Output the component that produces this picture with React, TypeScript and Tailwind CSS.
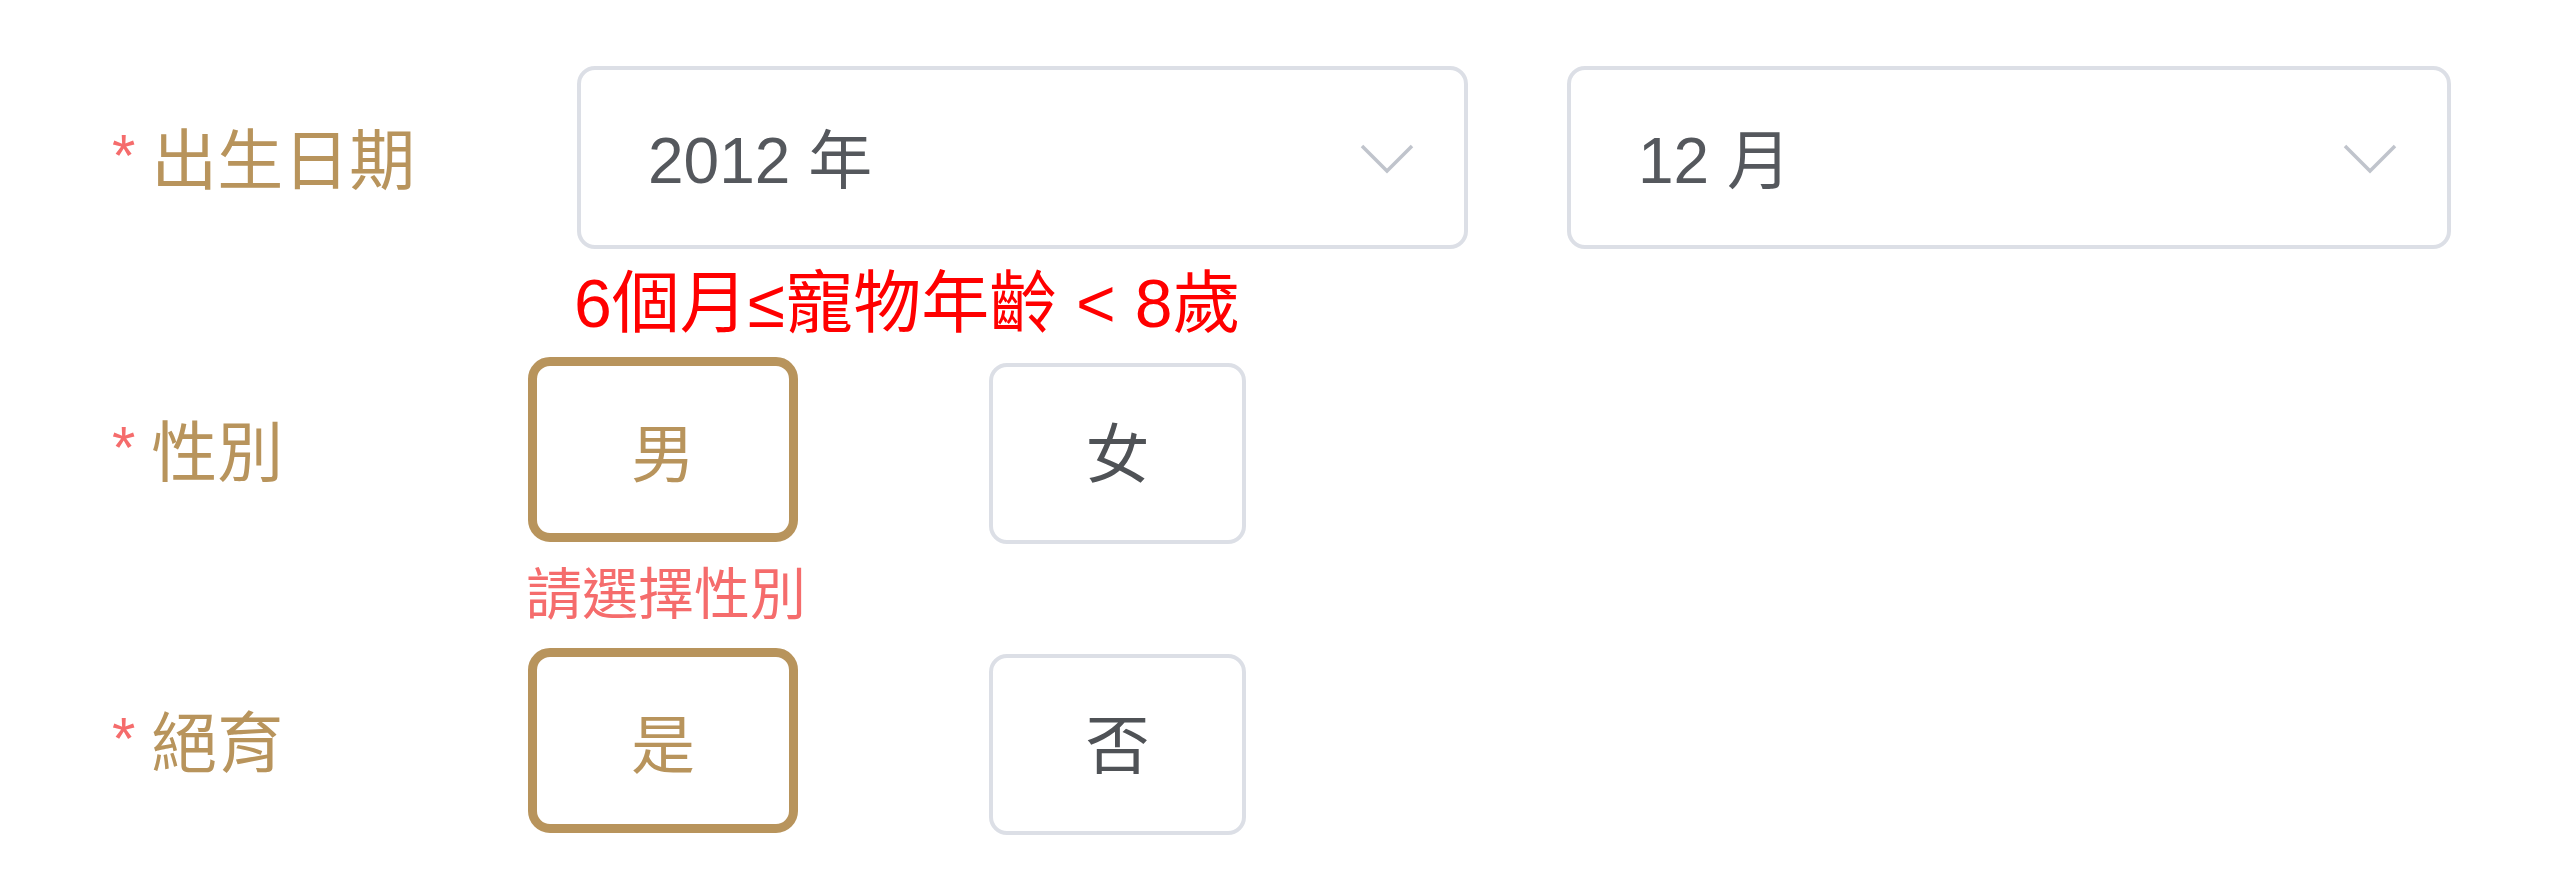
import React from "react";

function Chevron() {
  return (
    <svg width="54" height="30" viewBox="0 0 54 30" className="shrink-0 mt-[2px]">
      <polyline points="2,2 27,27 52,2" fill="none" stroke="#c0c4cc" strokeWidth="3.5" />
    </svg>
  );
}

function FieldLabel({ text, width }: { text: string; width: string }) {
  return (
    <div className={`${width} shrink-0 flex items-center text-[66px] leading-none text-[#b8945c] pt-[6px]`}>
      <span className="text-[#f56c6c] mr-[16px] self-start mt-[-2px] text-[60px]">*</span>
      <span>{text}</span>
    </div>
  );
}

function Select({ value, width }: { value: string; width: string }) {
  return (
    <div
      className={`${width} h-[183px] shrink-0 border-[4px] border-[#dcdfe6] rounded-[18px] flex items-center justify-between pl-[67px] pr-[50px] bg-white`}
    >
      <span className="text-[64px] leading-none text-[#55585d] pt-[6px]">{value}</span>
      <Chevron />
    </div>
  );
}

function Choice({ text, selected }: { text: string; selected?: boolean }) {
  if (selected) {
    return (
      <div className="w-[270px] h-[185px] shrink-0 border-[9px] border-[#b8945c] rounded-[22px] flex items-center justify-center pt-[10px] text-[64px] leading-none text-[#b8945c] bg-white">
        {text}
      </div>
    );
  }
  return (
    <div className="w-[257px] h-[181px] mt-[6px] shrink-0 border-[4px] border-[#dcdfe6] rounded-[18px] flex items-center justify-center pt-[2px] text-[64px] leading-none text-[#4f5256] bg-white">
      {text}
    </div>
  );
}

export default function App() {
  return (
    <div className="w-[2560px] h-[876px] bg-white overflow-hidden font-['Liberation_Sans','Noto_Sans_CJK_TC',sans-serif] pl-[112px] pt-[66px]">
      {/* 出生日期 */}
      <div className="flex items-center h-[183px]">
        <FieldLabel text="出生日期" width="w-[465px]" />
        <div className="flex gap-[99px]">
          <Select value="2012 年" width="w-[891px]" />
          <Select value="12 月" width="w-[884px]" />
        </div>
      </div>
      <div className="h-[108px] pl-[462px] flex items-center">
        <span className="text-[68px] leading-none text-[#ff0000] whitespace-nowrap">
          6個月≤寵物年齡 &lt; 8歲
        </span>
      </div>

      {/* 性別 */}
      <div className="flex items-start h-[185px]">
        <div className="h-[185px] flex items-center">
          <FieldLabel text="性別" width="w-[416px]" />
        </div>
        <div className="flex items-start gap-[191px]">
          <Choice text="男" selected />
          <Choice text="女" />
        </div>
      </div>
      <div className="h-[106px] pl-[414px] flex items-center">
        <span className="text-[56px] leading-none text-[#f56c6c]">請選擇性別</span>
      </div>

      {/* 絕育 */}
      <div className="flex items-start h-[185px]">
        <div className="h-[185px] flex items-center">
          <FieldLabel text="絕育" width="w-[416px]" />
        </div>
        <div className="flex items-start gap-[191px]">
          <Choice text="是" selected />
          <Choice text="否" />
        </div>
      </div>
    </div>
  );
}
